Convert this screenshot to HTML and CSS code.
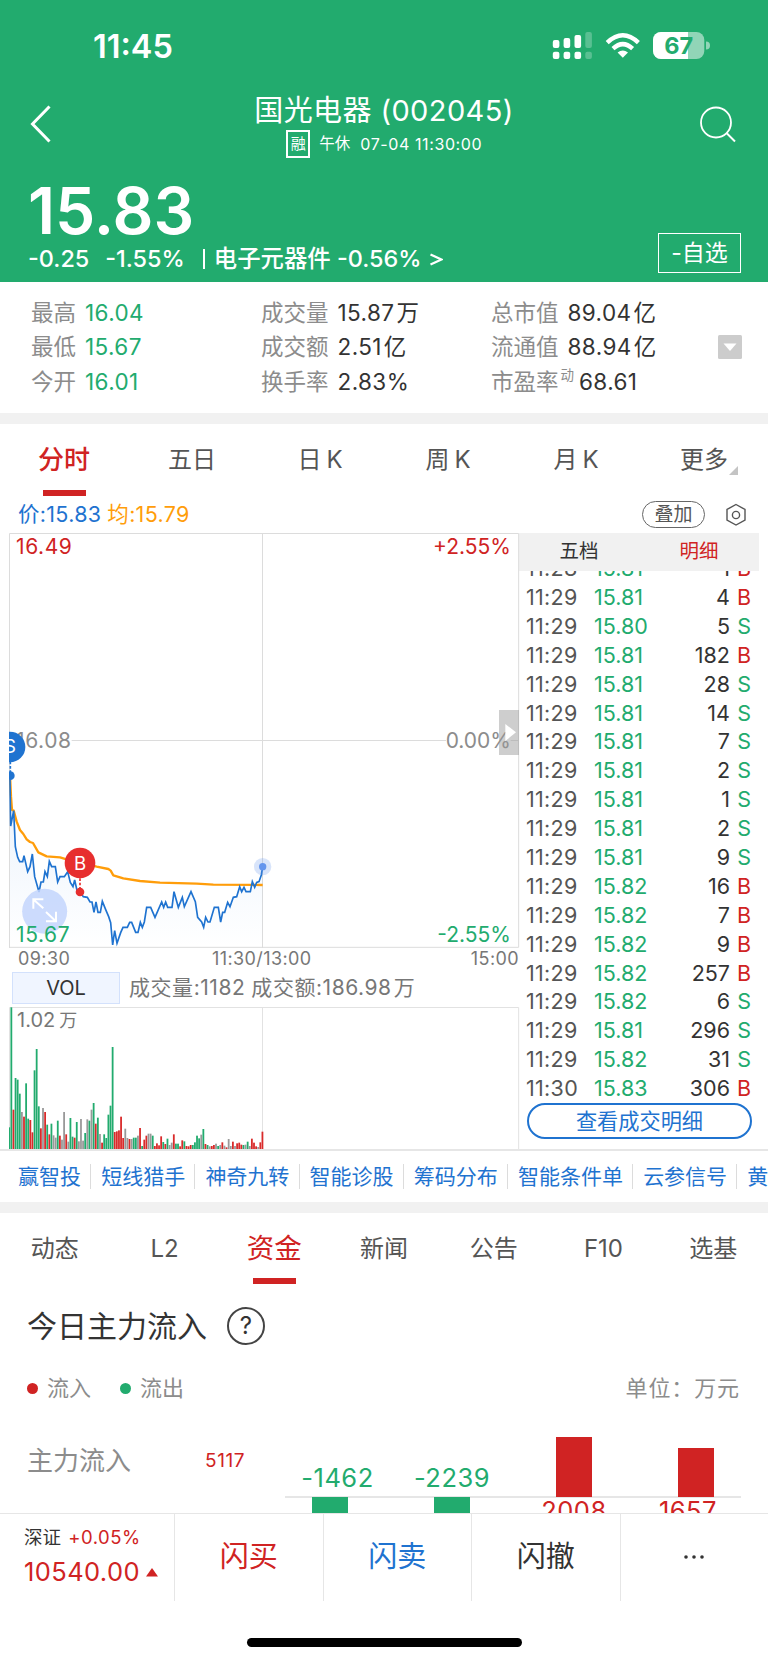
FILE: index.html
```html
<!DOCTYPE html>
<html lang="zh-CN">
  <head>
    <meta charset="UTF-8" />
    <meta name="viewport" content="width=device-width, initial-scale=1.0" />
    <title>国光电器 (002045)</title>
    <link rel="stylesheet" href="styles.css">
  </head>
  <body>
    <header class="header">
      <div class="status-bar">
        <span class="clock">11:45</span>
        <svg class="status-icons" width="160" height="30" viewBox="0 0 160 30">
          <g fill="#fff">
            <rect x="2.8" y="9" width="6.6" height="8" rx="2" />
            <rect x="13.6" y="7" width="6.6" height="10" rx="2" />
            <rect x="24.5" y="4" width="6.6" height="13" rx="2" />
            <rect x="35.3" y="1" width="6.6" height="16" rx="2" opacity="0.25" />
            <rect x="2.8" y="20.7" width="6.6" height="7.2" rx="2" />
            <rect x="13.6" y="20.7" width="6.6" height="7.2" rx="2" />
            <rect x="24.5" y="20.7" width="6.6" height="7.2" rx="2" />
            <rect x="35.3" y="20.7" width="6.6" height="7.2" rx="2" opacity="0.25" />
            <path d="M72.8 26.8 L67.6 21.6 Q72.8 17.4 78 21.6 Z" />
          </g>
          <g fill="none" stroke="#fff" stroke-width="4.4">
            <path d="M57.2 11.6 Q72.8 -3 88.4 11.6" />
            <path d="M63 17.6 Q72.8 8.6 82.6 17.6" />
          </g>
          <rect x="103" y="1" width="51.3" height="27" rx="8" fill="#fff" opacity="0.5" />
          <path d="M111 1 H138 V28 H111 A8 8 0 0 1 103 20 V9 A8 8 0 0 1 111 1 Z" fill="#fff" />
          <path d="M156 10.5 A4 4 0 0 1 156 18.5 Z" fill="#fff" opacity="0.5" />
          <text class="battery-text" x="128.6" y="23.3">67</text>
        </svg>
      </div>
      <div class="nav-bar">
        <svg class="back" width="24" height="40" viewBox="0 0 24 40">
          <path d="M20.5 2.5 L3.5 20 L20.5 37.5" fill="none" stroke="#fff" stroke-width="3" />
        </svg>
        <div class="title">
          <div class="name">国光电器 (002045)</div>
          <div class="state">
            <span class="tag">融</span>
            <span class="rest">午休</span>
            <span class="time">07-04 11:30:00</span>
          </div>
        </div>
        <svg class="search" width="38" height="38" viewBox="0 0 38 38">
          <circle cx="17" cy="16.5" r="15" fill="none" stroke="#fff" stroke-width="1.8" />
          <path d="M27.5 27 L36 35.5" stroke="#fff" stroke-width="2" />
        </svg>
      </div>
      <div class="price">15.83</div>
      <div class="change">
        <span class="diff">-0.25</span>
        <span class="pct">-1.55%</span>
        <span class="bar"></span>
        <span class="sector">电子元器件 -0.56%</span>
        <svg width="13" height="13" viewBox="0 0 13 13">
          <path d="M0.5 1.5 L11.5 6.5 L0.5 11.5" fill="none" stroke="#fff" stroke-width="2.3" />
        </svg>
        <span class="favorite">-自选</span>
      </div>
    </header>

    <section class="stats">
      <div class="stat-col down">
        <div><label>最高</label><b>16.04</b></div>
        <div><label>最低</label><b>15.67</b></div>
        <div><label>今开</label><b>16.01</b></div>
      </div>
      <div class="stat-col">
        <div><label>成交量</label><b>15.87<i>万</i></b></div>
        <div><label>成交额</label><b>2.51<i>亿</i></b></div>
        <div><label>换手率</label><b>2.83%</b></div>
      </div>
      <div class="stat-col">
        <div><label>总市值</label><b>89.04<i>亿</i></b></div>
        <div><label>流通值</label><b>88.94<i>亿</i></b></div>
        <div><label>市盈率</label><sup>动</sup><b>68.61</b></div>
      </div>
      <svg class="toggle" width="24" height="24" viewBox="0 0 24 24">
        <rect width="24" height="24" rx="1.5" fill="#ccc" />
        <path d="M5.5 8.5 H18.5 L12 16 Z" fill="#fff" />
      </svg>
    </section>

    <nav class="tabs period-tabs">
      <span class="active">分时</span>
      <span>五日</span>
      <span>日<i>K</i></span>
      <span>周<i>K</i></span>
      <span>月<i>K</i></span>
      <span class="more">更多</span>
    </nav>

    <div class="quote-line">
      <span class="blue">价:15.83</span>
      <span class="orange">均:15.79</span>
      <span class="overlay-btn">叠加</span>
      <svg width="22" height="24" viewBox="0 0 22 24" fill="none" stroke="#555" stroke-width="1.4">
        <path d="M11 1.5 L20 6.5 V17 L11 22 L2 17 V6.5 Z" />
        <circle cx="11" cy="12" r="3.6" />
      </svg>
    </div>

    <main class="market">
      <div class="charts">
        <div class="chart">
          <span class="lbl top left red">16.49</span>
          <span class="lbl top right red">+2.55%</span>
          <span class="lbl mid left">16.08</span>
          <span class="lbl mid right">0.00%</span>
          <svg width="511" height="415" viewBox="27 -561 1533 1245">
            <defs>
              <linearGradient id="fade" x1="0" y1="0" x2="0" y2="1">
                <stop offset="0" stop-color="#2a7de1" stop-opacity="0.1" />
                <stop offset="1" stop-color="#2a7de1" stop-opacity="0" />
              </linearGradient>
            </defs>
            <g fill="none" stroke="#dcdcdc" stroke-width="3">
              <path d="M28.5 684 V-559.5 H1556 V682 H27" />
              <path d="M215 61.5 H1338 M1532 61.5 H1556 M787.5 -561 V684" />
            </g>
            <polygon id="area" fill="url(#fade)" />
            <polyline fill="none" stroke="#ff9d0a" stroke-width="7" stroke-linejoin="round" points="30,165 33,230 36,270 41,272 50,305 60,330 70,342 80,358 90,366 99,369 115,397 140,409 180,412 200,418 240,428 290,440 325,447 332,452 340,466 370,475 420,483 480,488 590,491 640,494 788,495" />
            <polyline id="line" fill="none" stroke="#1f73d0" stroke-width="5" />
            <circle cx="134" cy="574" r="67.5" fill="#c3d5fd" opacity="0.85" />
            <path d="M100 566 V538 H130 M102 540 L130 565 M168 575 V604 H138 M166 602 L138 576" fill="none" stroke="#fff" stroke-width="6" />
            <path d="M31 125 V160" stroke="#1f73d0" stroke-width="5" stroke-dasharray="8 5" />
            <circle cx="30" cy="81" r="46" fill="#1f73d0" />
            <circle cx="31" cy="167" r="13" fill="#1f73d0" />
            <text class="mark" x="30" y="100">S</text>
            <path d="M240 475 V510" stroke="#e72e2e" stroke-width="5" stroke-dasharray="8 5" />
            <circle cx="240" cy="429" r="46" fill="#e72e2e" />
            <circle cx="240" cy="516" r="13" fill="#e72e2e" />
            <text class="mark" x="240" y="449">B</text>
            <circle cx="788" cy="440" r="26" fill="#6495ed" opacity="0.25" />
            <circle cx="788" cy="440" r="11" fill="#6495ed" />
            <path d="M1497 -30 H1557 V105 H1497 Z" fill="#999" opacity="0.48" />
            <path d="M1516 12 L1548 37 L1516 63 Z" fill="#fff" />
          </svg>
          <span class="lbl bottom left green">15.67</span>
          <span class="lbl bottom right green">-2.55%</span>
        </div>
        <div class="axis">
          <span>09:30</span>
          <span>11:30/13:00</span>
          <span>15:00</span>
        </div>
        <div class="vol-line">
          <span class="vol-btn">VOL</span>
          <span>成交量:1182</span>
          <span>成交额:186.98<i>万</i></span>
        </div>
        <div class="volume">
          <svg id="volume" width="511" height="142" viewBox="27 171 1533 426">
            <path d="M28.5 597 V172.5 H1556 V597 M787.5 171 V597" fill="none" stroke="#e2e2e2" stroke-width="3" />
          </svg>
          <span class="vol-max">1.02<i>万</i></span>
        </div>
      </div>

      <div class="ticks">
        <div class="tick-tabs"><span>五档</span><span class="red">明细</span></div>
        <div class="tick-list" id="ticks"></div>
        <div class="tick-more">查看成交明细</div>
      </div>
    </main>

    <div class="links">
      <span>赢智投</span>
      <span>短线猎手</span>
      <span>神奇九转</span>
      <span>智能诊股</span>
      <span>筹码分布</span>
      <span>智能条件单</span>
      <span>云参信号</span>
      <span>黄金</span>
    </div>

    <nav class="tabs info-tabs">
      <span>动态</span>
      <span>L2</span>
      <span class="active">资金</span>
      <span>新闻</span>
      <span>公告</span>
      <span>F10</span>
      <span>选基</span>
    </nav>

    <section class="flow">
      <h2>今日主力流入 <span class="help">?</span></h2>
      <div class="legend">
        <span class="dot in"></span><span>流入</span>
        <span class="dot out"></span><span>流出</span>
        <span class="unit">单位：万元</span>
      </div>
      <div class="flow-row">
        <span class="flow-name">主力流入</span>
        <span class="flow-total">5117</span>
        <div class="flow-bars">
          <div class="cell neg"><em>-1462</em><i style="height: 40px"></i></div>
          <div class="cell neg"><em>-2239</em><i style="height: 60px"></i></div>
          <div class="cell pos"><i style="height: 60px"></i><em>2008</em></div>
          <div class="cell pos"><i style="height: 49px"></i><em>1657</em></div>
        </div>
      </div>
    </section>

    <footer class="trade-bar">
      <div class="index">
        <div class="index-name">深证 <span class="red">+0.05%</span></div>
        <div class="index-value red">10540.00<svg width="12" height="9" viewBox="0 0 12 9"><path d="M6 0 L12 8.5 H0 Z" fill="#d02323" /></svg></div>
      </div>
      <div class="action red">闪买</div>
      <div class="action blue">闪卖</div>
      <div class="action">闪撤</div>
      <div class="action">
        <svg width="22" height="6" viewBox="0 0 22 6" fill="#333">
          <circle cx="3" cy="3" r="1.8" /><circle cx="11" cy="3" r="1.8" /><circle cx="19" cy="3" r="1.8" />
        </svg>
      </div>
    </footer>
    <div class="home-indicator"></div>

    <script src="script.js"></script>
  </body>
</html>
```
FILE: styles.css
```css
body {
  font-family: Inter, "Noto Sans CJK SC", sans-serif;
  margin: 0;
  padding: 0;
  width: 768px;
  height: 1662px;
  overflow: hidden;
  background: #fff;
  color: #333;
  line-height: 1.2;
}

i,
em {
  font-style: normal;
}

span,
b,
label {
  white-space: nowrap;
}

.red {
  color: #d02323;
}

.green {
  color: #22ab6e;
}

.blue {
  color: #1f73d0;
}

.orange {
  color: #ff9d0a;
}

/* Green header */
.header {
  height: 282px;
  background: #22ab6e;
  color: #fff;
}

.status-bar {
  height: 92px;
  box-sizing: border-box;
  padding: 31px 54px 0 93px;
  display: flex;
  justify-content: space-between;
  align-items: flex-start;
}

.clock {
  font-size: 32.5px;
  line-height: 31px;
  font-weight: 600;
}

.status-icons {
  margin-right: 4px;
  flex: none;
}

.battery-text {
  font-size: 23.5px;
  font-weight: 700;
  fill: #22ab6e;
  text-anchor: middle;
}

.nav-bar {
  height: 78px;
  display: flex;
  justify-content: space-between;
  padding: 0 31px 0 29px;
}

.back {
  margin: 12px 16px 0 0;
}

.search {
  margin-top: 14px;
}

.title {
  text-align: center;
}

.name {
  font-size: 29px;
  line-height: 38px;
  letter-spacing: 0.4px;
}

.state {
  display: flex;
  align-items: center;
  margin-left: 32px;
  font-size: 16px;
  line-height: 28px;
}

.tag {
  box-sizing: border-box;
  width: 24px;
  height: 28px;
  border: 2px solid #fff;
  font-size: 15px;
  line-height: 24px;
  text-align: center;
}

.rest {
  margin-left: 9px;
  font-size: 15.5px;
}

.time {
  margin-left: 10px;
  letter-spacing: 0.6px;
}

.price {
  padding-left: 28px;
  font-size: 64px;
  line-height: 82px;
  height: 70px;
  font-weight: 600;
}

.change {
  display: flex;
  align-items: center;
  height: 38px;
  padding: 0 27px 0 28px;
  font-size: 23.4px;
  font-weight: 500;
}

.pct {
  margin-left: 16px;
}

.bar {
  width: 2px;
  height: 20px;
  margin: 0 9px 0 18px;
  background: #fff;
}

.change svg {
  margin-left: 9px;
}

.favorite {
  box-sizing: border-box;
  width: 83px;
  height: 40px;
  margin: -12px 0 0 auto;
  border: 1px solid #fff;
  font-size: 23px;
  font-weight: 400;
  line-height: 38px;
  text-align: center;
}

/* Key figures */
.stats {
  display: flex;
  height: 131px;
  box-sizing: border-box;
  padding: 14px 26px 0 31px;
  font-size: 22.5px;
  line-height: 34.3px;
}

.stat-col {
  width: 230px;
}

.stat-col:nth-child(3) {
  width: 226px;
}

.stat-col div {
  height: 34.3px;
  white-space: nowrap;
}

.stats label {
  color: #8c8c8c;
}

.stats b {
  font-weight: 400;
  margin-left: 9px;
  letter-spacing: 0.4px;
}

.stats b i {
  margin-left: 2px;
}

.stats sup {
  display: inline-block;
  color: #8c8c8c;
  font-size: 13.5px;
  line-height: 14px;
  margin-left: 2px;
  vertical-align: 10px;
}

.stats sup + b {
  margin-left: 5px;
}

.down b {
  color: #22ab6e;
}

.toggle {
  margin: 39px 0 0 auto;
}

/* Tab strips */
.tabs {
  display: flex;
  border-top: 11px solid #f1f1f1;
  color: #555;
}

.tabs span {
  position: relative;
  flex: 1;
  text-align: center;
}

.tabs .active {
  color: #d02323;
}

.tabs .active::after {
  content: "";
  position: absolute;
  left: 50%;
  bottom: 0;
  width: 43px;
  height: 6px;
  margin-left: -21.5px;
  background: #d02323;
}

.period-tabs {
  height: 72px;
  font-size: 24px;
  line-height: 72px;
}

.period-tabs .active {
  font-size: 26px;
  font-weight: 500;
}

.period-tabs i {
  margin-left: 5px;
}

.period-tabs .more::after {
  content: "";
  position: absolute;
  right: 30px;
  top: 42px;
  border-left: 9px solid transparent;
  border-bottom: 9px solid #c4c4c4;
}

.quote-line {
  display: flex;
  align-items: center;
  height: 37px;
  padding: 0 21px 0 18px;
  font-size: 21.5px;
  letter-spacing: 0.3px;
}

.quote-line .orange {
  margin-left: 6px;
}

.overlay-btn {
  box-sizing: border-box;
  width: 63px;
  height: 27px;
  margin: 0 20px 0 auto;
  border: 1px solid #666;
  border-radius: 14px;
  color: #555;
  font-size: 19px;
  line-height: 25px;
  letter-spacing: 0;
  text-align: center;
}

/* Charts and tick list */
.market {
  display: flex;
  height: 616px;
  border-bottom: 2px solid #e6e6e6;
}

.charts {
  width: 511px;
  margin-left: 9px;
}

.chart {
  position: relative;
  height: 415px;
  font-size: 21px;
  color: #8c8c8c;
}

.chart svg {
  position: absolute;
  left: 0;
  top: 0;
}

.chart .lbl {
  position: absolute;
  line-height: 24px;
}

.chart .left {
  left: 7px;
  letter-spacing: 0.6px;
}

.chart .right {
  right: 9px;
}

.chart .top {
  top: 2px;
}

.chart .mid {
  top: 196px;
}

.chart .bottom {
  bottom: 1px;
}

.chart .red {
  color: #d02323;
}

.chart .green {
  color: #22ab6e;
}

.mark {
  font-size: 56px;
  fill: #fff;
  text-anchor: middle;
}

.axis {
  display: flex;
  height: 24px;
  padding: 0 1px 0 9px;
  font-size: 18px;
  line-height: 21px;
  letter-spacing: 0.4px;
  color: #777;
}

.axis span:first-child {
  width: 194px;
}

.axis span:last-child {
  margin-left: auto;
}

.vol-line {
  display: flex;
  height: 35px;
  font-size: 21px;
  line-height: 32px;
  letter-spacing: 0.55px;
  color: #777;
}

.vol-line i {
  margin-left: 2px;
}

.vol-btn {
  box-sizing: border-box;
  width: 108px;
  height: 32px;
  margin: 0 3px;
  border: 1px solid #d3e1fc;
  background: #f0f5ff;
  color: #333;
  font-size: 20px;
  line-height: 31px;
  letter-spacing: 0;
  text-align: center;
}

.vol-line span + span {
  margin-left: 6px;
}

.volume {
  position: relative;
  height: 142px;
}

.volume svg {
  display: block;
}

.vol-max {
  position: absolute;
  left: 8px;
  top: 1px;
  font-size: 20px;
  line-height: 24px;
  color: #777;
}

.vol-max i {
  font-size: 18px;
  margin-left: 4px;
}

.ticks {
  width: 240px;
  margin-left: -1px;
}

.tick-tabs {
  display: flex;
  height: 38px;
  background: #f1f1f1;
  font-size: 19.5px;
  line-height: 37px;
}

.tick-tabs span {
  flex: 1;
  text-align: center;
}

.tick-list {
  display: flex;
  flex-direction: column;
  justify-content: flex-end;
  height: 532px;
  overflow: hidden;
  font-size: 21.5px;
}

.tick {
  display: flex;
  flex: none;
  height: 28.9px;
  line-height: 28.9px;
  padding: 0 8px 0 7px;
}

.tick .t {
  width: 68px;
  letter-spacing: 0.3px;
  color: #555;
}

.tick .n {
  flex: 1;
  text-align: right;
}

.tick .s {
  width: 21px;
  text-align: right;
}

.tick-more {
  box-sizing: border-box;
  width: 225px;
  height: 36px;
  margin-left: 8px;
  border: 2px solid #1f73d0;
  border-radius: 18px;
  color: #1f73d0;
  font-size: 21.2px;
  line-height: 32px;
  text-align: center;
}

/* Shortcuts */
.links {
  display: flex;
  align-items: center;
  height: 51px;
  padding-left: 8px;
  overflow: hidden;
  font-size: 21px;
  color: #1f73d0;
}

.links span {
  flex: none;
  padding: 0 9.2px 0 10px;
  border-right: 1px solid #dcdcdc;
  line-height: 25px;
}

.info-tabs {
  height: 72px;
  font-size: 24px;
  line-height: 71px;
}

.info-tabs .active {
  font-size: 27.5px;
}

.info-tabs .active::after {
  bottom: 1px;
}

/* Capital flow */
.flow {
  height: 228px;
  overflow: hidden;
}

.flow h2 {
  display: flex;
  align-items: center;
  height: 82px;
  margin: 0;
  padding-left: 27px;
  font-size: 30px;
  font-weight: 400;
}

.help {
  box-sizing: border-box;
  width: 38px;
  height: 38px;
  margin-left: 20px;
  border: 2px solid #444;
  border-radius: 50%;
  font-size: 24px;
  line-height: 34px;
  text-align: center;
}

.legend {
  display: flex;
  align-items: center;
  height: 42px;
  padding: 0 28px 0 27px;
  font-size: 22px;
  color: #8c8c8c;
}

.dot {
  width: 11px;
  height: 11px;
  margin-right: 9px;
  border-radius: 50%;
  background: #d02323;
}

.dot.out {
  margin-left: 29px;
  background: #22ab6e;
}

.unit {
  margin-left: auto;
  letter-spacing: 0.9px;
}

.flow-row {
  display: flex;
  height: 105px;
  padding-left: 27px;
}

.flow-name {
  width: 178px;
  font-size: 26px;
  line-height: 104px;
  color: #8c8c8c;
}

.flow-total {
  width: 80px;
  font-size: 19px;
  line-height: 104px;
  letter-spacing: 0.6px;
  color: #d02323;
}

/* bars hang from a shared zero line */
.flow-bars {
  display: flex;
  flex: none;
  box-sizing: border-box;
  width: 456px;
  height: 89px;
  padding-left: 2px;
  border-bottom: 2px solid #e6e6e6;
  font-size: 25.5px;
  line-height: 30px;
  letter-spacing: 0.5px;
}

.cell {
  flex: none;
  width: 86px;
  display: flex;
  flex-direction: column;
  align-items: center;
}

.cell + .cell {
  margin-left: 36px;
}

.cell i,
.cell em {
  flex: none;
}

.cell i {
  width: 36px;
}

.neg {
  height: 104px;
  box-sizing: border-box;
  padding-top: 54px;
  color: #22ab6e;
}

.neg i {
  background: #22ab6e;
}

.neg em {
  height: 34px;
}

.neg:first-child em {
  margin-left: 15px;
}

.pos {
  height: 130px;
  justify-content: flex-end;
  color: #d02323;
}

.pos i {
  background: #d02323;
}

.pos em {
  height: 42px;
  line-height: 28px;
}

.pos:last-child em {
  margin-right: 16px;
}

/* Bottom bar */
.trade-bar {
  display: flex;
  height: 87px;
  border-top: 1px solid #e6e6e6;
}

.index {
  box-sizing: border-box;
  width: 175px;
  padding-left: 24px;
  border-right: 1px solid #e6e6e6;
}

.index-name {
  padding-top: 8px;
  font-size: 18.5px;
  line-height: 30px;
}

.index-name .red {
  margin-left: 2px;
  letter-spacing: 0.5px;
}

.index-value {
  font-size: 25.5px;
  line-height: 40px;
  letter-spacing: 0.4px;
  white-space: nowrap;
}

.index-value svg {
  margin-left: 6px;
  vertical-align: 4px;
}

.action {
  flex: 1;
  border-right: 1px solid #e6e6e6;
  font-size: 29px;
  line-height: 86px;
  text-align: center;
}

.action:last-child {
  border-right: 0;
}

.action svg {
  vertical-align: 7px;
}

.home-indicator {
  width: 275px;
  height: 9px;
  margin: 37px auto 0 247px;
  border-radius: 5px;
  background: #000;
}
```
FILE: script.js
```javascript
// Intraday price line
const points =
  "30,180 32,318 41,272 46,380 53,412 59,425 68,425 72,407 83,455 90,440 97,402 104,470 117,516 123,486 130,486 " +
  "135,455 142,470 148,424 155,440 166,440 173,486 180,470 193,470 203,455 211,487 219,500 224,480 232,516 240,516 " +
  "250,530 262,532 270,546 276,546 282,577 288,546 294,577 301,577 307,544 318,571 326,590 332,608 338,675 344,632 " +
  "351,670 362,638 369,622 382,622 389,607 395,607 407,637 414,637 421,607 427,622 433,606 440,562 452,562 465,592 " +
  "485,546 491,562 497,546 503,562 516,562 522,515 535,562 547,532 553,560 573,515 586,545 593,592 605,606 611,622 " +
  "617,592 624,606 630,606 643,562 655,562 662,606 668,577 674,577 683,547 690,560 700,532 710,530 719,500 725,515 " +
  "732,502 738,515 751,515 757,485 764,502 770,487 777,485 784,465 788,440";
document.getElementById("line").setAttribute("points", points);
document.getElementById("area").setAttribute("points", "30,682 " + points + " 788,682");

// Volume per minute: g = down, r = up, n = flat
const volumes =
  "g65 g425 r118 g213 g208 g166 n111 r97 g197 g91 r87 r50 g236 g300 g128 r62 n123 r111 g73 r44 g76 n41 n34 g85 r40 " +
  "n28 n111 r44 n22 g93 g37 r34 g81 n23 n90 n25 g48 n89 g85 n118 g138 r76 g94 n45 r19 g44 g33 g103 g130 g306 r51 " +
  "r53 r56 r97 r33 n61 n33 r30 n30 g34 g34 n40 r63 g9 r28 r40 n46 n46 g40 r9 r17 r11 r38 g21 r15 g31 n12 n19 r44 " +
  "g16 g16 r8 r26 g23 r9 r8 r12 g12 g20 g40 g32 n43 g60 r15 g12 n8 r9 r12 n16 g9 n12 r20 n10 r5 n30 n9 r22 n9 r17 " +
  "r19 r13 g12 n13 g22 n9 r31 r19 r8 n6 r20 r52";
const colors = { g: "#22ab6e", r: "#d92b2b", n: "#999" };
const volume = document.getElementById("volume");
volumes.split(" ").forEach((v, i) => {
  const h = Number(v.slice(1));
  const rect = document.createElementNS("http://www.w3.org/2000/svg", "rect");
  rect.setAttribute("x", 25 + i * 6.33);
  rect.setAttribute("y", 597 - h);
  rect.setAttribute("width", 5.4);
  rect.setAttribute("height", h);
  rect.setAttribute("fill", colors[v[0]]);
  volume.appendChild(rect);
});

// Trade details
const ticks = [
  ["11:28", "15.81", 1, "B"],
  ["11:29", "15.81", 4, "B"],
  ["11:29", "15.80", 5, "S"],
  ["11:29", "15.81", 182, "B"],
  ["11:29", "15.81", 28, "S"],
  ["11:29", "15.81", 14, "S"],
  ["11:29", "15.81", 7, "S"],
  ["11:29", "15.81", 2, "S"],
  ["11:29", "15.81", 1, "S"],
  ["11:29", "15.81", 2, "S"],
  ["11:29", "15.81", 9, "S"],
  ["11:29", "15.82", 16, "B"],
  ["11:29", "15.82", 7, "B"],
  ["11:29", "15.82", 9, "B"],
  ["11:29", "15.82", 257, "B"],
  ["11:29", "15.82", 6, "S"],
  ["11:29", "15.81", 296, "S"],
  ["11:29", "15.82", 31, "S"],
  ["11:30", "15.83", 306, "B"],
];
document.getElementById("ticks").innerHTML = ticks
  .map(
    ([time, price, count, side]) =>
      `<div class="tick"><span class="t">${time}</span><span class="green">${price}</span><span class="n">${count}</span><span class="s ${side === "B" ? "red" : "green"}">${side}</span></div>`
  )
  .join("");
```
